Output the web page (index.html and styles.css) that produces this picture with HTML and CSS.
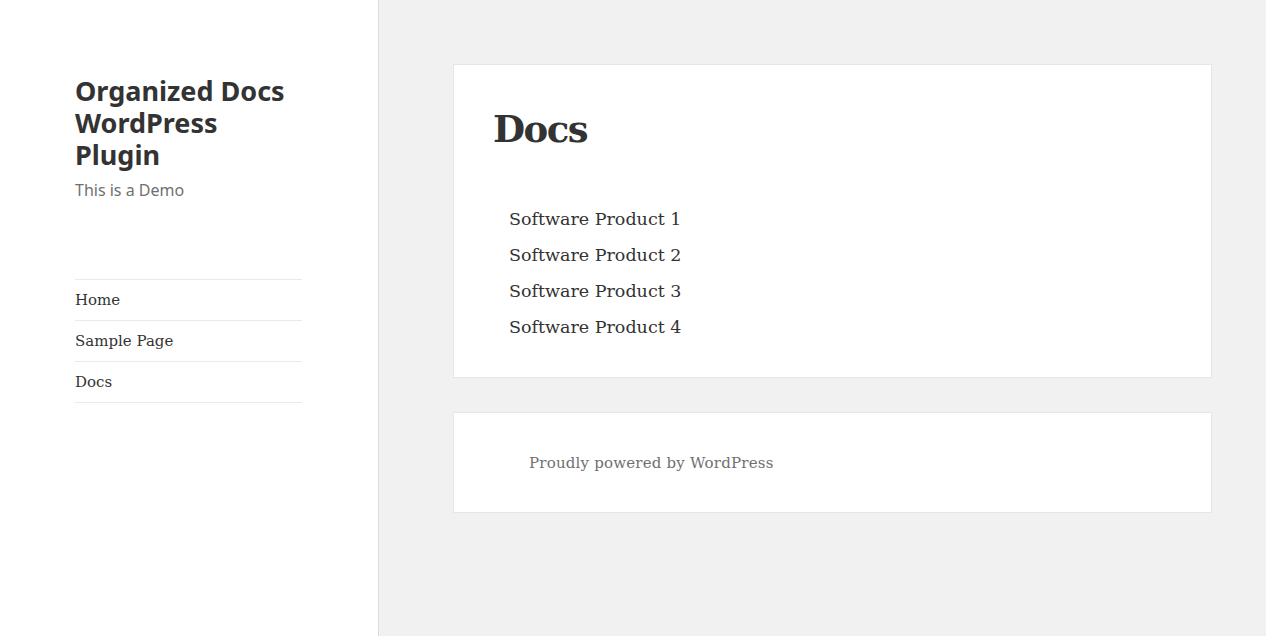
FILE: index.html
```html
<!DOCTYPE html>
<html lang="en">
<head>
<meta charset="utf-8">
<title>Docs – Organized Docs WordPress Plugin</title>
<link rel="stylesheet" href="styles.css">
</head>
<body>
<div class="site">
  <aside class="sidebar">
    <header class="site-header">
      <p class="site-title">Organized Docs WordPress Plugin</p>
      <p class="site-description">This is a Demo</p>
    </header>
    <nav class="main-nav">
      <ul class="menu">
        <li class="menu-item"><a href="#">Home</a></li>
        <li class="menu-item"><a href="#">Sample Page</a></li>
        <li class="menu-item"><a href="#">Docs</a></li>
      </ul>
    </nav>
  </aside>
  <main class="content">
    <article class="card entry">
      <h1 class="entry-title">Docs</h1>
      <ul class="doc-list">
        <li><a href="#">Software Product 1</a></li>
        <li><a href="#">Software Product 2</a></li>
        <li><a href="#">Software Product 3</a></li>
        <li><a href="#">Software Product 4</a></li>
      </ul>
    </article>
    <footer class="card site-footer">
      <a href="#">Proudly powered by WordPress</a>
    </footer>
  </main>
</div>
</body>
</html>
```
FILE: styles.css
```css
html, body {
  margin: 0;
  padding: 0;
}
body {
  background: #f1f1f1;
  color: #333333;
  font-family: "DejaVu Serif", serif;
}
a {
  color: #333333;
  text-decoration: none;
}
.site {
  display: flex;
  min-height: 636px;
}
.sidebar {
  width: 379px;
  flex: none;
  background: #ffffff;
  border-right: 1px solid #dcdcdc;
  box-sizing: border-box;
  padding: 75px 0 0 75px;
}
.site-header p {
  margin: 0;
}
.site-title {
  font-family: "Noto Sans", sans-serif;
  font-weight: 700;
  font-size: 27px;
  line-height: 32px;
  width: 227px;
}
.site-header .site-description {
  font-family: "Noto Sans", sans-serif;
  font-size: 16px;
  line-height: 24px;
  color: #707070;
  margin-top: 7px;
}
.main-nav {
  margin-top: 77px;
  width: 227px;
}
.menu {
  list-style: none;
  margin: 0;
  padding: 0;
  border-top: 1px solid #eaeaea;
}
.menu-item {
  border-bottom: 1px solid #eaeaea;
  font-size: 15px;
  line-height: 24px;
  padding: 8px 0 8px 0;
}
.content {
  flex: 1;
  padding: 64px 0 0 74px;
}
.card {
  width: 759px;
  box-sizing: border-box;
  background: #ffffff;
  border: 1px solid #e6e6e6;
}
.entry {
  height: 314px;
  padding: 40px 38px 0 39px;
}
.entry-title {
  margin: 0;
  font-size: 37px;
  letter-spacing: -1.5px;
  line-height: 48px;
  font-weight: 700;
}
.doc-list {
  list-style: none;
  margin: 48px 0 0 0;
  padding: 0 0 0 16px;
}
.doc-list li {
  font-size: 17.5px;
  line-height: 36px;
}
.site-footer {
  margin-top: 34px;
  height: 101px;
  padding: 38px 0 0 75px;
  font-size: 15px;
  letter-spacing: 0.2px;
  line-height: 24px;
}
.site-footer a {
  color: #707070;
}
```
